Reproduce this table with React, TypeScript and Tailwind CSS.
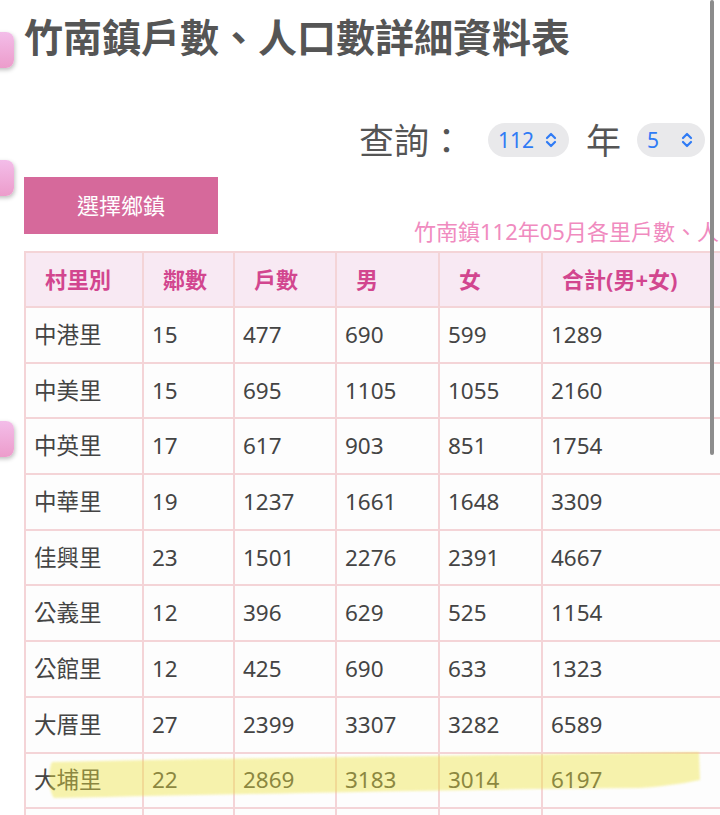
import React from 'react';

const rows = [
  ['中港里', '15', '477', '690', '599', '1289'],
  ['中美里', '15', '695', '1105', '1055', '2160'],
  ['中英里', '17', '617', '903', '851', '1754'],
  ['中華里', '19', '1237', '1661', '1648', '3309'],
  ['佳興里', '23', '1501', '2276', '2391', '4667'],
  ['公義里', '12', '396', '629', '525', '1154'],
  ['公館里', '12', '425', '690', '633', '1323'],
  ['大厝里', '27', '2399', '3307', '3282', '6589'],
  ['大埔里', '22', '2869', '3183', '3014', '6197'],
  ['', '', '', '', '', ''],
];

const headers = ['村里別', '鄰數', '戶數', '男', '女', '合計(男+女)'];

const Chevrons = () => (
  <svg width="14" height="16" viewBox="0 0 14 16" fill="none" stroke="#2f7bf5" strokeWidth="2.2" strokeLinecap="round" strokeLinejoin="round">
    <path d="M3 6 L7 2 L11 6" />
    <path d="M3 10 L7 14 L11 10" />
  </svg>
);

const SelectPill = ({ value, width }: { value: string; width: string }) => (
  <div className={`flex h-[34px] items-center justify-between rounded-full bg-[#e9e9eb] pl-[10px] pr-[11px] ${width}`}>
    <span className="text-[21px] leading-none text-[#2f7bf5]">{value}</span>
    <Chevrons />
  </div>
);

const SideTab = ({ top }: { top: string }) => (
  <div
    className={`absolute left-[-22px] ${top} h-[36px] w-[36px] rounded-[8px] bg-gradient-to-b from-[#f3bde9] to-[#ec9ccb] shadow-[1px_2px_4px_rgba(0,0,0,0.25)]`}
  />
);

export default function App() {
  return (
    <div
      className="relative h-[815px] w-[720px] overflow-hidden bg-white"
      style={{ fontFamily: '"Noto Sans", "Noto Sans CJK TC", sans-serif' }}
    >
      {/* title */}
      <h1 className="mt-[12px] h-[50px] pl-[24px] text-[39px] font-bold leading-[50px] text-[#555555] whitespace-nowrap">
        竹南鎮戶數、人口數詳細資料表
      </h1>

      {/* query row */}
      <div className="mt-[58px] flex h-[40px] items-center justify-end pr-[15px]">
        <span className="text-[35px] leading-none text-[#555555]">查詢：</span>
        <div className="ml-[24px]">
          <SelectPill value="112" width="w-[81px]" />
        </div>
        <span className="ml-[17px] text-[35px] leading-none text-[#555555]">年</span>
        <div className="ml-[16px]">
          <SelectPill value="5" width="w-[68px]" />
        </div>
      </div>

      {/* button + caption */}
      <div className="mt-[17px] flex h-[57px] items-end pl-[24px]">
        <button className="flex h-[57px] w-[194px] shrink-0 items-center justify-center bg-[#d6699b] text-[22px] text-white">
          選擇鄉鎮
        </button>
        <span className="mb-[-10px] ml-[196px] whitespace-nowrap text-[22px] leading-[25px] text-[#f08bbf]">
          竹南鎮112年05月各里戶數、人口數統計表
        </span>
      </div>

      {/* table */}
      <div className="mt-[17px] pl-[24px]">
        <table className="table-fixed border-collapse w-[900px]">
          <colgroup>
            <col className="w-[118px]" />
            <col className="w-[91px]" />
            <col className="w-[102px]" />
            <col className="w-[103px]" />
            <col className="w-[103px]" />
            <col className="w-[383px]" />
          </colgroup>
          <thead>
            <tr className="h-[55px] bg-[#f8e9f3]">
              {headers.map((h) => (
                <th
                  key={h}
                  className="border-2 border-[#f4d4d7] pl-[19px] text-left text-[22px] font-bold text-[#d2468f]"
                >
                  {h}
                </th>
              ))}
            </tr>
          </thead>
          <tbody>
            {rows.map((r, ri) => (
              <tr key={ri} className="h-[55.7px] bg-[#fdfdfd]">
                {r.map((c, i) => (
                  <td
                    key={i}
                    className="border-2 border-[#f4d4d7] pl-[8px] text-left text-[22.5px] text-[#444444]"
                  >
                    {c}
                  </td>
                ))}
              </tr>
            ))}
          </tbody>
        </table>
      </div>

      {/* highlighter stroke on 大埔里 */}
      <svg
        className="pointer-events-none absolute left-0 top-[740px]"
        width="720"
        height="70"
        viewBox="0 0 720 70"
      >
        <defs>
          <filter id="soft" x="-5%" y="-30%" width="110%" height="160%">
            <feGaussianBlur stdDeviation="1.2" />
          </filter>
        </defs>
        <path
          d="M52 22 C 220 18, 460 16, 699 12 L 700 40 C 690 42, 670 46, 640 48 C 420 50, 250 54, 54 58 C 48 50, 48 30, 52 22 Z"
          fill="#eee43e"
          opacity="0.42"
          filter="url(#soft)"
        />
      </svg>

      {/* floating side tabs */}
      <SideTab top="top-[32px]" />
      <SideTab top="top-[160px]" />
      <SideTab top="top-[421px]" />

      {/* scrollbar */}
      <div className="absolute right-[6px] top-0 h-[455px] w-[4px] rounded-full bg-[#8c8c8c]" />
    </div>
  );
}
